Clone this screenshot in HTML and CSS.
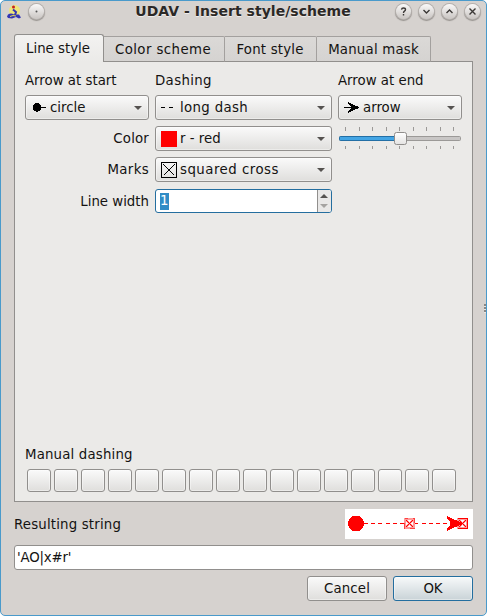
FILE: index.html
```html
<!DOCTYPE html>
<html lang="en">
<head>
<meta charset="utf-8">
<title>UDAV - Insert style/scheme</title>
<link rel="stylesheet" href="styles.css">
</head>
<body>
<div class="window">
  <header class="titlebar">
    <svg class="app-icon" width="16" height="16" viewBox="0 0 16 16">
      <circle cx="7.500" cy="5.500" r="5.500" fill="#f3ea66" opacity=".8"/>
      <path d="M1 9.500q3-2 6 0l5 0 2 3-2 1-3-1.500-4 1.500-4-.5-1-1.500z" fill="#3436b4"/>
      <path d="M6 4.500l3 2.500-1 3" fill="none" stroke="#3436b4" stroke-width="2"/>
      <circle cx="6.500" cy="2" r="1.500" fill="#c82020"/>
      <path d="M3 11.500l3-1 3 .5" stroke="#e5dc55" fill="none"/>
    </svg>
    <span class="round menu"><svg width="15" height="15"><circle cx="7.5" cy="7.5" r="1" fill="#555"/></svg></span>
    <h1>UDAV - Insert style/scheme</h1>
    <div class="controls">
      <span class="round"><svg width="15" height="15"><path d="M5.5 5.6q.2-1.6 2-1.6 2 0 2 1.600 0 1-1 1.600-1 .6-1 1.800M7.500 10v1.500"/></svg></span>
      <span class="round"><svg width="15" height="15"><path d="M4.500 6l3 3 3-3"/></svg></span>
      <span class="round"><svg width="15" height="15"><path d="M4.500 9l3-3 3 3"/></svg></span>
      <span class="round"><svg width="15" height="15"><path d="M4.500 4.500l6 6M10.500 4.500l-6 6"/></svg></span>
    </div>
  </header>

  <nav class="tabs">
    <span class="tab active">Line style</span>
    <span class="tab t2">Color scheme</span>
    <span class="tab t3">Font style</span>
    <span class="tab t4">Manual mask</span>
  </nav>

  <main class="panel">
    <div class="form">
      <span class="label">Arrow at start</span>
      <span class="label loose">Dashing</span>
      <span class="label">Arrow at end</span>

      <div class="combo">
        <svg class="ico" width="16" height="16" shape-rendering="crispEdges"><circle cx="6" cy="7.500" r="4.300"/><path d="M9 7h6v1H9z"/></svg>
        <span>circle</span><i class="arrow"></i>
      </div>
      <div class="combo">
        <svg class="ico" width="16" height="16" shape-rendering="crispEdges"><path d="M0 7h4v1H0zM8 7h4v1H8z"/></svg>
        <span class="loose">long dash</span><i class="arrow"></i>
      </div>
      <div class="combo">
        <svg class="ico" width="16" height="16" shape-rendering="crispEdges"><path d="M0 7h7v1H0zM4 2l4 2 7 3v1l-7 3-4 2v-2l3-3V7L4 4z"/></svg>
        <span>arrow</span><i class="arrow"></i>
      </div>

      <span class="label right snug">Color</span>
      <div class="combo">
        <svg class="ico" width="16" height="16"><path fill="#f00" d="M0 0h16v16H0z"/></svg>
        <span>r - red</span><i class="arrow"></i>
      </div>
      <svg class="slider" width="124" height="25">
        <defs>
          <linearGradient id="knob" x2="0" y2="1"><stop stop-color="#fff"/><stop offset="1" stop-color="#e4e3e2"/></linearGradient>
        </defs>
        <path class="ticks" d="M7.500 1v4m14-4v4m13-4v4m14-4v4m13-4v4m14-4v4m13-4v4m14-4v4m13-4v4M7.500 20v3m14-3v3m13-3v3m14-3v3m13-3v3m14-3v3m13-3v3m14-3v3m13-3v3"/>
        <rect x="1.500" y="10.500" width="121" height="4" rx="1" fill="#c8c6c5" stroke="#9b9997"/>
        <rect x="1.500" y="10.500" width="60" height="4" rx="1" fill="#43a5e4" stroke="#236fa5"/>
        <rect x="56.500" y="6.500" width="12" height="12" rx="2" fill="url(#knob)" stroke="#8f8d8b"/>
      </svg>

      <span class="label right loose">Marks</span>
      <div class="combo">
        <svg class="ico" width="16" height="16" shape-rendering="crispEdges"><path d="M.5.5h15v15H.5zM2.500 2.500l11 11M13.500 2.500l-11 11" fill="none" stroke="#000"/></svg>
        <span class="wide">squared cross</span><i class="arrow"></i>
      </div>
      <span></span>

      <span class="label right width-label">Line width</span>
      <div class="spin">
        <span class="selected">1</span>
        <div class="steps"><i class="arrow up"></i><i class="arrow dim"></i></div>
      </div>
    </div>

    <div class="manual">
      <span class="label snug">Manual dashing</span>
      <div class="cells"><b></b><b></b><b></b><b></b><b></b><b></b><b></b><b></b><b></b><b></b><b></b><b></b><b></b><b></b><b></b><b></b></div>
    </div>
  </main>

  <div class="result">
    <span class="label snug">Resulting string</span>
    <svg class="preview" width="128" height="30" shape-rendering="crispEdges">
      <path fill="#fff" d="M0 0h128v30H0z"/>
      <path d="M18 14.500h92" stroke="#f00" stroke-dasharray="4 3.200" stroke-dashoffset="-1"/>
      <circle cx="11" cy="14.500" r="8" fill="#f00"/>
      <path d="M60 10h9v9h-9z" fill="#fff" stroke="#ff9a9a" stroke-width="2"/>
      <path d="M60 10l9 9M69 10l-9 9" stroke="#ff9a9a" stroke-width="2"/>
      <path d="M59.500 9.500h10v10h-10z" fill="none" stroke="#ff4040" stroke-dasharray="3 5 3 0"/>
      <path d="M61 11l7 7M68 11l-7 7" fill="none" stroke="#f00"/>
      <path d="M113 10h9v9h-9z" fill="#fff" stroke="#ff9a9a" stroke-width="2"/>
      <path d="M113 10l9 9M122 10l-9 9" stroke="#ff9a9a" stroke-width="2"/>
      <path d="M102 7l16 7.500-16 7.500v-2l4-5.500-4-5.500z" fill="#f00"/>
      <path d="M112.500 9.500h10v10h-10M114 11l7 7M121 11l-7 7" fill="none" stroke="#f00"/>
    </svg>
  </div>

  <div class="field">'AO|x#r'</div>

  <footer class="actions">
    <span class="button snug">Cancel</span>
    <span class="button primary">OK</span>
  </footer>
  <i class="grip"></i>
</div>
</body>
</html>
```
FILE: styles.css
```css
* { box-sizing: border-box; }
body {
  margin: 0;
  background: #fff;
  color: #141312;
  font: 13.33px/16px "DejaVu Sans", sans-serif;
}
.window {
  position: relative;
  width: 487px;
  height: 616px;
  padding: 0 13px;
  display: flex;
  flex-direction: column;
  background: #d6d2cf;
  border: 1px solid #4a9acb;
  border-radius: 5px;
}
.titlebar {
  height: 33px;
  margin: 0 -7px;
  padding-top: 3px;
  display: flex;
  align-items: flex-start;
}
.app-icon { margin-top: 1px; }
h1 {
  flex: 1;
  margin: -2px 0 0;
  padding-left: 46px;
  text-align: center;
  white-space: nowrap;
  font-size: 14px;
  line-height: 18px;
  font-weight: bold;
  letter-spacing: .04px;
  color: #2b2826;
  text-shadow: 0 1px #efedeb;
}
.controls { display: flex; gap: 8px; }
.round {
  width: 15px;
  height: 15px;
  border-radius: 50%;
  background: linear-gradient(#faf9f9, #c9c5c2);
  box-shadow: 0 0 0 1px #b5b1ae, 0 1px 1px 1px #97938f;
}
.round svg { display: block; fill: none; stroke: #3b3836; stroke-width: 1.4; }
.round.menu { margin-left: 6px; }
.menu svg { stroke: none; }
.tabs {
  display: flex;
  align-items: flex-end;
  height: 28px;
  margin-bottom: -1px;
  z-index: 1;
}
.tab {
  height: 26px;
  border: 1px solid #a3a09e;
  border-left: 0;
  border-radius: 0 2px 0 0;
  background: linear-gradient(#dbd9d7, #d5d3d1);
  line-height: 25px;
  text-align: center;
  border-bottom-color: #918f8d;
}
.active {
  width: 90px;
  height: 28px;
  border: 1px solid #918f8d;
  border-bottom: 0;
  border-radius: 3px 3px 0 0;
  background: linear-gradient(#f3f2f1, #ebeae8);
  line-height: 27px;
  padding-right: 2px;
}
.t2 { width: 121px; padding-right: 2px; letter-spacing: .42px; }
.t3 { width: 92px; padding-right: 1px; letter-spacing: .2px; }
.t4 { width: 114px; letter-spacing: .2px; }
.loose { letter-spacing: .35px; }
.snug { letter-spacing: .17px; }
.wide { letter-spacing: .48px; }
.panel {
  height: 441px;
  padding: 10px;
  display: flex;
  flex-direction: column;
  justify-content: space-between;
  background: #ebeae8;
  border: 1px solid #918f8d;
}
.form {
  display: grid;
  grid-template-columns: 124px 177px 124px;
  grid-template-rows: 17px 25px 25px 25px 24px;
  gap: 6px;
}
.label { align-self: center; white-space: nowrap; }
.right { text-align: right; }
.combo, .spin, .button, .cells b {
  border: 1px solid #918f8d;
  border-radius: 3px;
  background: linear-gradient(#fafafa, #dfdedc);
  box-shadow: inset 0 0 0 1px #ffffff66;
}
.combo {
  display: flex;
  align-items: center;
  padding: 0 6px 0 5px;
}
.combo span { flex: 1; margin-left: 3px; }
.ico { flex: none; }
.arrow {
  border: 4px solid transparent;
  border-top-color: #555250;
  border-bottom: 0;
}
.up { border-top: 0; border-bottom: 4px solid #555250; }
.dim { border-top-color: #a5a3a1; }
.spin {
  display: flex;
  justify-content: space-between;
  margin-top: 1px;
  height: 24px;
  border-color: #246e9f;
  background: #fff;
  overflow: hidden;
}
.width-label { margin-top: 3px; }
.selected {
  margin: 3px 0 0 4px;
  width: 9px;
  height: 17px;
  background: #308cc6;
  color: #fff;
}
.steps {
  width: 14px;
  padding: 4px 0 4px 2px;
  display: flex;
  flex-direction: column;
  justify-content: space-between;
  align-items: flex-start;
  background: #e9e8e7;
  border-left: 1px solid #918f8d;
}
.ticks { stroke: #9b9997; }
.manual .label { position: relative; top: 1px; }
.cells { display: flex; gap: 3px; margin: 7px 0 -1px 2px; }
.cells b { width: 24px; height: 23px; }
.result {
  height: 30px;
  margin-top: 7px;
  display: flex;
  justify-content: space-between;
}
.result .label { padding-top: 1px; }
.field {
  height: 25px;
  margin-top: 6px;
  padding-left: 2px;
  line-height: 23px;
  letter-spacing: -.2px;
  background: #fff;
  border: 1px solid #918f8d;
  border-radius: 3px;
}
.actions {
  display: flex;
  justify-content: flex-end;
  gap: 6px;
  margin-top: 6px;
}
.button { width: 80px; height: 25px; line-height: 23px; text-align: center; }
.primary { border-color: #246e9f; background: linear-gradient(#f7f9fa, #c9d3d7); }
.grip {
  position: absolute;
  right: 0;
  top: 303px;
  width: 2px;
  height: 9px;
  background: repeating-linear-gradient(#8a8785 0 2px, #e9e7e5 2px 3px);
}
```
